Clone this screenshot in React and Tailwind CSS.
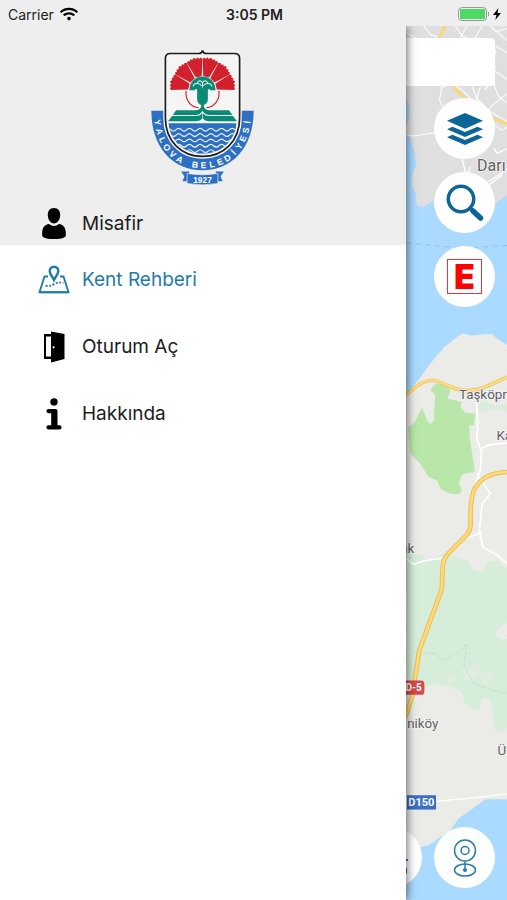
import { FaWifi } from 'react-icons/fa';

const PETAL_ANGLES = [-75, -45, -15, 15, 45, 75];
const WAVE_ROWS = [269, 285, 301, 317, 333];

// ---------- Icons ----------

function UserIcon() {
  return (
    <svg viewBox="0 0 26 34" className="h-[33px] w-[26px] fill-black">
      <path d="M13 1c4.300 0 6.600 3.200 6.400 7.600C19.200 13.300 16.500 17 13 17S6.800 13.300 6.600 8.600C6.400 4.200 8.700 1 13 1Z" />
      <path d="M8 17.500c2.800 2.600 7.200 2.600 10 0 5 .7 7 3.500 7.200 9.500 0 1.800 0 3-.6 3.600C23 32.200 19 33 13 33S3 32.200 1.400 30.600C.8 30 .8 28.800.8 27 1 21 3 18.200 8 17.500Z" />
    </svg>
  );
}

function MapPinIcon() {
  return (
    <svg viewBox="0 0 32 29" className="h-[29px] w-8" fill="none" stroke="#1f7ba6">
      <path d="M10 11.500H6.500L1.500 27.200h29l-5-15.700H22" strokeWidth="1.800" />
      <path d="M1.500 27.400h29" strokeWidth="2" />
      <path d="M16 1.700a4.300 4.300 0 0 1 4.300 4.300c0 2.800-2.500 5.200-4.300 9-1.800-3.800-4.300-6.200-4.300-9A4.300 4.300 0 0 1 16 1.700Z" strokeWidth="2.400" />
      <path d="M7.500 20.800c5 .4 6-.3 9-1.900s5-1.400 9-1.200" strokeWidth="1.800" strokeDasharray="2 1.600" />
    </svg>
  );
}

function DoorIcon() {
  return (
    <svg viewBox="0 0 22 32" className="h-8 w-[22px]">
      <path d="M8 3H1v25h7v-2.500H3v-20h5Z" fill="#000" />
      <path d="M8 .5 21.500 3v25L8 31.500Z" fill="#000" />
      <circle cx="10.600" cy="16.300" r="1.100" fill="#fff" />
    </svg>
  );
}

function InfoIcon() {
  return (
    <svg viewBox="0 0 16 32" className="h-8 w-4 fill-black">
      <circle cx="8" cy="3.900" r="3.700" />
      <path d="M2.500 11h7.200q1.800 0 1.800 1.800V27.300h2a2 2 0 0 1 0 4.200h-11a2 2 0 0 1 0-4.200h2.700V15.200H2.500a2.100 2.100 0 0 1 0-4.200Z" />
    </svg>
  );
}

function LayersIcon() {
  return (
    <svg viewBox="0 0 36 32" className="h-8 w-9 fill-[#0c6597]">
      <path d="M18 0 36 7.800 18 15.700 0 7.800Z" />
      <path d="m0 16.200 5.500-2.500L18 18.900l12.500-5.200 5.500 2.500L18 24Z" />
      <path d="m0 24.200 5.500-2.500L18 26.900l12.500-5.200 5.500 2.500L18 32Z" />
    </svg>
  );
}

function SearchIcon() {
  return (
    <svg viewBox="0 0 38 38" className="size-[38px]" fill="none" stroke="#0c6597">
      <circle cx="15" cy="15" r="12.700" strokeWidth="3.500" />
      <path d="m24 24 3 3" strokeWidth="3.500" />
      <path d="m27 27 7.500 7" strokeWidth="5.500" strokeLinecap="round" />
    </svg>
  );
}

function WebcamIcon() {
  return (
    <svg viewBox="0 0 24 38" className="h-[38px] w-6" fill="none" stroke="#2b7ca0" strokeWidth="1.500">
      <circle cx="12" cy="11.500" r="10.500" />
      <circle cx="12" cy="11.500" r="4" />
      <path d="M12 22v9" />
      <ellipse cx="12" cy="31" rx="10.500" ry="6" />
      <circle cx="12" cy="31" r="1.300" fill="#2b7ca0" />
    </svg>
  );
}

// ---------- Municipality emblem ----------

// Words set letter by letter along the ribbon: [text, start %, step %]
const RIBBON_WORDS = [
  ['YALOVA', 4, 6],
  ['BELEDİYESİ', 45, 5.7],
];

function Emblem() {
  return (
    <svg viewBox="30 25 320 415" className="h-[139px] w-[107px]" role="img" aria-label="Yalova Belediyesi">
      <defs>
        <path id="shield" d="M79 56q0-15 15-15h85q9 0 11-9 2 9 11 9h85q15 0 15 15v177c0 72-50 116-111 116S79 305 79 233Z" />
        <path id="ribbonText" d="M45 230C50 320 104 384 190 384S330 320 335 230" />
        <clipPath id="water">
          <path d="M88 248h204c-5 56-48 93-102 93S93 304 88 248Z" />
        </clipPath>
      </defs>

      {/* ribbon */}
      <path d="M37 212h38c0 90 45 140 115 140s115-50 115-140h38c0 112-66 178-153 178S37 324 37 212Z" fill="#2d70c3" />

      {/* shield */}
      <use href="#shield" fill="#f5f5f4" stroke="#f5f5f4" strokeWidth="13" />
      <use href="#shield" fill="#f5f5f4" stroke="#1d1d1d" strokeWidth="5" />

      <text fontSize="26" fontWeight="700" fill="#fff" fontFamily="Liberation Sans, sans-serif" textAnchor="middle">
        {RIBBON_WORDS.map(([word, start, step]) =>
          [...word].map((letter, i) => (
            <textPath key={word + i} href="#ribbonText" startOffset={`${start + i * step}%`}>
              {letter}
            </textPath>
          ))
        )}
      </text>

      {/* carnation */}
      <g transform="translate(190 151)">
        {PETAL_ANGLES.map((angle) => (
          <path
            key={angle}
            transform={`rotate(${angle})`}
            d="M-9-42-24-91l5-5 4 3 4-6 5 4 6-6 6 6 5-4 4 6 4-3 5 5L9-42Z"
            fill="#d2202c"
          />
        ))}
      </g>
      <path d="M141 153c-4 28 15 48 37 50m24 0c22-2 41-22 37-50" fill="none" stroke="#d2202c" strokeWidth="3.500" />
      <path d="M151 151c0-24 17-41 39-41s39 17 39 41h-17v-4l-6 2v28c0 10-4 14-12 18v14h-8v-14c-8-4-12-8-12-18v-28l-6-2v4Z" fill="#0a8a74" />
      <path d="M162 140c1-11 20-13 25-2M218 140c-1-11-20-13-25-2M174 130c4-10 12-9 16-1 4-8 12-9 16 1M190 129v14" fill="none" stroke="#f5f5f4" strokeWidth="3" />
      <path d="M111 211h57c10 0 14-4 18-10h8c4 6 8 10 18 10h57l10 14h-68c-10 0-16-5-21-12-5 7-11 12-21 12h-68Z" fill="#0a8a74" />
      <path d="M99 228h71c10 0 15-4 20-10 5 6 10 10 20 10h71l12 16h-82c-10 0-16-4-21-9-5 5-11 9-21 9H87Z" fill="#0a8a74" />
      <path d="M190 213v28" stroke="#f5f5f4" strokeWidth="2" />

      {/* sea */}
      <g clipPath="url(#water)">
        <path d="M80 250h220v100H80Z" fill="#2d70c3" />
        {WAVE_ROWS.map((y) => (
          <path
            key={y}
            d={`M79 ${y}q8-8 16 0t16 0 16 0 16 0 16 0 16 0 16 0 16 0 16 0 16 0 16 0 16 0 16 0 16 0`}
            fill="none"
            stroke="#f5f5f4"
            strokeWidth="3.500"
          />
        ))}
      </g>

      {/* year banner */}
      <path d="M126 394h24v29h-20l6-14Zm128 0h-24v29h20l-6-14Z" fill="#2d70c3" />
      <path d="M144 400q46 8 92 0v30q-46 8-92 0Z" fill="#2d70c3" stroke="#eee" strokeWidth="2" />
      <text x="190" y="427" fontSize="25" fontWeight="700" fill="#fff" fontFamily="Liberation Sans, sans-serif" textAnchor="middle">
        1927
      </text>
    </svg>
  );
}

// ---------- Map ----------

function MapCanvas() {
  return (
    <svg
      viewBox="32 78 304 2622"
      preserveAspectRatio="xMaxYMin slice"
      className="absolute inset-0 size-full"
      fontFamily="Roboto, sans-serif"
      fill="none"
    >
      <path d="M0 0h336v2700H0Z" fill="#aadaff" />

      {/* north shore */}
      <path d="M32 78h304v505l-36 28-60 20-80-35-45 5-30 20-20-5-5-40-12-20 5-40 10-20-5-40-15-45-11-15Z" fill="#dfdfdf" />
      <path d="M32 303l8 5 3 22-4 35-7 8Z" fill="#aadaff" />
      <g stroke="#fff" strokeWidth="3">
        <path d="M32 98l50 28 40-5 30 12 60-20M85 78l20 25 55 22M180 78l20 30 60 25M215 78l-20 35M260 78l-30 50M285 78l51 45M300 95l36-10M290 130l46 30M300 150l-5 60 41 30" />
        <path d="M135 265l35-15 30 20 30 30 20 15M140 260l-8 40 20 40M32 405l25 3 60-10M230 260l15 35 40 40 51 30M255 262l-20 60M290 240l20 50 26 20M336 280l-50 40-20 40M290 370l30 20 16-10" />
        <path d="M200 475l10 40 30 25 30 10 40-25 26-20M280 555l40-30M225 500l-10 30M295 445l10 15 31-15M300 200l-30 70" strokeWidth="4" />
      </g>
      <path d="M154 70l-34 62M170 258l50 46 70 50 46 18" stroke="#f9d77b" strokeWidth="9" />

      {/* ferry line */}
      <path d="M32 728l110 11 90 3 104-6" stroke="#86b3d3" strokeWidth="2" strokeDasharray="15 14" />

      {/* south shore */}
      <path d="M32 1182l43-50 28-40 42-50 25-20 17-14 18-9 20 7 55-5 10 1 15 13 31 20v1361h-66l-80 58-25 35-65 45-68 15Z" fill="#ebebe8" />
      <path d="M32 1665l40-5 28 20 50-20 65 20 20 30 30 5 10-30 35-5 15 20h11v165l-28 20-8 20 20 15 16-5v260l-15 20-23-5-5-55-8-35-25-8-10 40-35-15-20-45-40-15-40-10-25 18-53-13Z" fill="#d6edda" />
      <path d="M190 2000l28 10 15-22 24 8-12 34-30 12Zm60 30l24-18 22 22-24 20Zm-100 0l25-8 10 18-24 8Z" fill="#ebebe8" opacity=".5" />
      <path d="M105 1170l15-20 40 5 5 20-10 20 45 10-5 15 15 18 30 2-5 35h-13v30l13 85 3 25-38 7-10 28 10 20-10 12-25-2-30-15-10-25-25-10-25-40-30-30-7-80 17-10 25-48 15 38 10 12 10-12 5-75Z" fill="#b8e7a9" />
      <path d="M245 1212l30-8 25 14 36-10v25l-40-8-30 10-21-8Z" fill="#d6edda" opacity=".8" />
      <path d="M60 1955l60 5 25 20 40-20 30-30-10 60 30 60 60 20 41 10" stroke="#b4cdb8" strokeWidth="2" strokeDasharray="7 5" />

      {/* minor roads */}
      <g stroke="#fff" strokeWidth="5">
        <path d="M242 1180l5 80-2 60 13 30-3 60-15 40-5 40M258 1345l25-12 53-5M245 1420l40 60-25 30-8 80 10 50 45 25 29 27M200 1620l60-25M32 1675l25 17 25-10 60-9" />
      </g>
      <path d="M125 2402l110-10 101-12" stroke="#fff" strokeWidth="4" />

      {/* highways */}
      <path d="M32 1184l33-27q40-28 75-9t65 22 60-8l71-32" stroke="#eebd50" strokeWidth="10" />
      <path d="M32 1184l33-27q40-28 75-9t65 22 60-8l71-32" stroke="#fde081" strokeWidth="6" />
      <path d="M336 1415q-70 2-97 48-16 30-13 110-2 25-26 45l-40 40q-17 18-18 40l-3 70-34 92-33 90-22 140-20 60" stroke="#eebd50" strokeWidth="14" />
      <path d="M336 1415q-70 2-97 48-16 30-13 110-2 25-26 45l-40 40q-17 18-18 40l-3 70-34 92-33 90-22 140-20 60" stroke="#fddb7d" strokeWidth="8" />

      {/* labels */}
      <g fill="#5e6165" stroke="#f4f4f2" strokeWidth="5" paintOrder="stroke" fontSize="40">
        <text x="245" y="512" fontSize="48">Darı</text>
        <text x="191" y="1197">Taşköpr</text>
        <text x="303" y="1320">Ka</text>
        <text x="57" y="1658" textAnchor="end">ık</text>
        <text x="129" y="2182" textAnchor="end">niköy</text>
        <text x="306" y="2262">Ü</text>
      </g>
      <g fontSize="30" fontWeight="700">
        <rect x="10" y="2040" width="77" height="43" rx="10" fill="#d6494c" />
        <text x="79" y="2072" textAnchor="end" fill="#fff">D-5</text>
        <rect x="35" y="2384" width="87" height="43" fill="#3a6fc4" />
        <text x="78" y="2417" fontSize="33" textAnchor="middle" fill="#fff">D150</text>
      </g>
    </svg>
  );
}

function RoundButton({ label, children }) {
  return (
    <button
      type="button"
      aria-label={label}
      className="flex size-[61px] shrink-0 items-center justify-center rounded-full bg-white"
    >
      {children}
    </button>
  );
}

// ---------- Drawer ----------

const MENU = [
  { label: 'Kent Rehberi', Icon: MapPinIcon, active: true },
  { label: 'Oturum Aç', Icon: DoorIcon },
  { label: 'Hakkında', Icon: InfoIcon },
];

function Drawer() {
  return (
    <aside className="relative z-10 flex w-4/5 shrink-0 flex-col bg-white text-[19px] text-[#1c1c1c] shadow-[2px_0_8px_rgba(0,0,0,0.5)]">
      <div className="bg-[#eeeeee] pt-[22px]">
        <div className="flex justify-center">
          <Emblem />
        </div>
        <div className="mt-[14px] flex h-11 items-center gap-3 pl-[37px]">
          <span className="flex w-[33px] justify-center"><UserIcon /></span>
          <span className="pt-0.5">Misafir</span>
        </div>
      </div>
      <nav className="pt-px">
        {MENU.map(({ label, Icon, active }) => (
          <a key={label} href="#" className={`flex h-[67px] items-center gap-3 pl-[37px] ${active ? 'text-[#1f7ba6]' : ''}`}>
            <span className="flex w-[33px] justify-center"><Icon /></span>
            <span className="pt-0.5">{label}</span>
          </a>
        ))}
      </nav>
    </aside>
  );
}

function StatusBar() {
  return (
    <header className="relative z-20 grid h-[26px] grid-cols-3 items-center bg-[#eeeeee] pt-0.5 pr-1.5 pl-2 text-[14px] text-[#222222]">
      <div className="flex items-center gap-1.5">
        <span>Carrier</span>
        <FaWifi className="size-[18px] text-black" />
      </div>
      <div className="text-center font-semibold">3:05 PM</div>
      <div className="flex items-center justify-end gap-1">
        <div className="flex items-center gap-px">
          <div className="h-[14px] w-[29px] rounded-sm border border-[#9a9a9a] p-px">
            <div className="h-full rounded-[1px] bg-[#4cd964]" />
          </div>
          <div className="h-1 w-px bg-[#9a9a9a]" />
        </div>
        <svg viewBox="0 0 8 12" className="h-3 w-2 fill-black">
          <path d="M5.500 0 0 7h3.500l-1.200 5L8 5H4.500Z" />
        </svg>
      </div>
    </header>
  );
}

export default function App() {
  return (
    <div className="flex min-h-screen flex-col overflow-hidden bg-white font-[Inter,sans-serif]">
      <StatusBar />
      <div className="flex flex-1">
        <Drawer />
        <main className="relative flex min-w-0 flex-1 flex-col overflow-hidden">
          <MapCanvas />
          <div className="relative flex flex-1 flex-col items-end py-3 pr-3">
            <input type="text" aria-label="Ara" className="h-12 w-full rounded-r bg-white px-2 outline-none" />
            <div className="mt-3 flex flex-col gap-[13px]">
              <RoundButton label="Katmanlar"><LayersIcon /></RoundButton>
              <RoundButton label="Ara"><SearchIcon /></RoundButton>
              <RoundButton label="Eczane">
                <span className="flex size-[35px] items-center justify-center border border-red-500 text-[34px] leading-none font-black text-[#ff0000]">
                  E
                </span>
              </RoundButton>
            </div>
            <div className="mt-auto flex gap-3">
              <RoundButton label="Konum">
                <svg viewBox="0 0 36 36" className="size-9" fill="none" stroke="#2b7ca0" strokeWidth="2">
                  <path d="M2 20h32M32 28v4q0 2-3 2H5q-3 0-3-2v-4" />
                </svg>
              </RoundButton>
              <RoundButton label="Kameralar"><WebcamIcon /></RoundButton>
            </div>
          </div>
        </main>
      </div>
    </div>
  );
}
